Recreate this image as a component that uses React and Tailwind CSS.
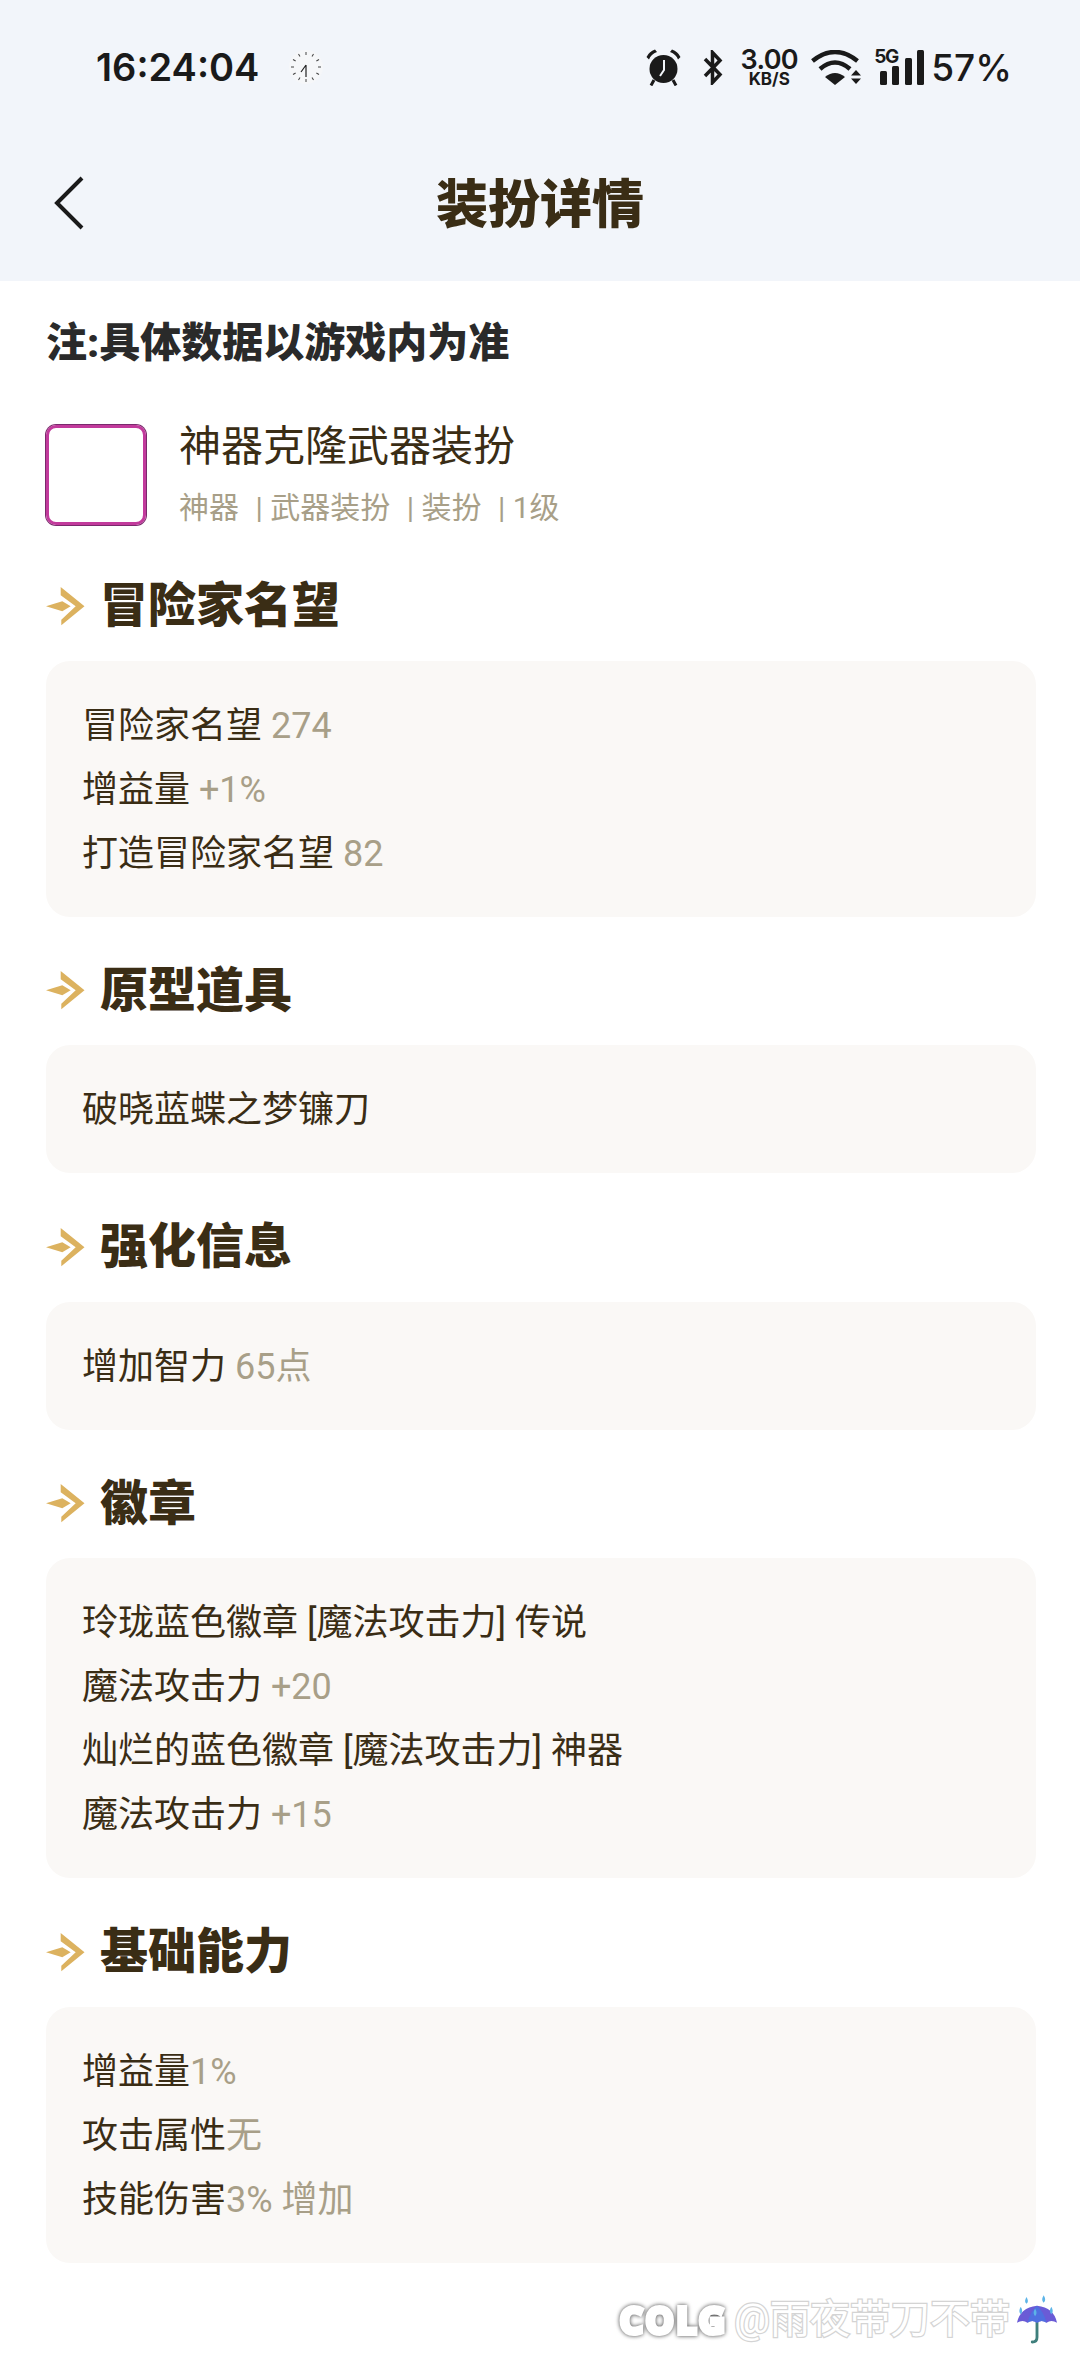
import React from "react";

const sections = [
  {
    title: "冒险家名望",
    rows: [
      ["冒险家名望 ", "274"],
      ["增益量 ", "+1%"],
      ["打造冒险家名望 ", "82"],
    ],
  },
  { title: "原型道具", rows: [["破晓蓝蝶之梦镰刀", ""]] },
  { title: "强化信息", rows: [["增加智力 ", "65点"]] },
  {
    title: "徽章",
    rows: [
      ["玲珑蓝色徽章 [魔法攻击力] 传说", ""],
      ["魔法攻击力 ", "+20"],
      ["灿烂的蓝色徽章 [魔法攻击力] 神器", ""],
      ["魔法攻击力 ", "+15"],
    ],
  },
  {
    title: "基础能力",
    rows: [
      ["增益量", "1%"],
      ["攻击属性", "无"],
      ["技能伤害", "3% 增加"],
    ],
  },
];

const ArrowMark = () => (
  <svg width="39" height="39" viewBox="0 0 39 39" className="shrink-0">
    <path d="M14.7 0L38.500 19.300 15.300 38.300V32.700L29.700 19.300 14.700 8.300Z" fill="#dcb25f" />
    <path d="M0 19.300L16.300 14.300 24.700 19.300 16.300 24.300Z" fill="#dcb25f" />
  </svg>
);

const Clock = () => (
  <svg width="34" height="34" viewBox="0 0 34 34" className="ml-[30px]">
    <circle cx="17" cy="17" r="17" fill="#f6f7f9" />
    {[...Array(12)].map((_, i) => (
      <line
        key={i}
        x1="17"
        y1="2"
        x2="17"
        y2="5"
        stroke="#444"
        strokeWidth="1"
        transform={`rotate(${i * 30} 17 17)`}
      />
    ))}
    <path d="M17 15L12 22M17 15V27" stroke="#222" strokeWidth="1.200" fill="none" />
  </svg>
);

const Alarm = () => (
  <svg width="35" height="37" viewBox="0 0 35 37">
    <circle cx="17.500" cy="20" r="14" fill="#1a1a1a" />
    <path d="M0.500 8Q3 2.500 9 0.500L11 3Q5 5 3 10.500Z M34.500 8Q32 2.500 26 0.500L24 3Q30 5 32 10.500Z" fill="#1a1a1a" />
    <path d="M8 31L5 36.500M27 31L30 36.500" stroke="#1a1a1a" strokeWidth="3" />
    <path d="M18 11V21L14 27" stroke="#f2f5fa" strokeWidth="2" fill="none" />
  </svg>
);

const Bluetooth = () => (
  <svg width="20" height="35" viewBox="0 0 20 35" className="ml-[22px]">
    <path d="M2 9L17 24.500 9.500 32.500V2.500L17 10.500 2 26" stroke="#1a1a1a" strokeWidth="3.500" fill="none" />
  </svg>
);

const Wifi = () => (
  <svg width="50" height="35" viewBox="0 0 50 35" className="ml-[14px]">
    <path d="M1.500 11Q24 -7 46.500 11" stroke="#1a1a1a" strokeWidth="4.500" fill="none" />
    <path d="M9 19Q24 6 39 19" stroke="#1a1a1a" strokeWidth="4.500" fill="none" />
    <path d="M24 35L14 27Q24 19 34 27Z" fill="#1a1a1a" />
    <path d="M45 20L50 25.500H40ZM40 28.500H50L45 34Z" fill="#1a1a1a" />
  </svg>
);

const Bars = () => (
  <svg width="44" height="35" viewBox="0 0 44 35">
    <rect x="0" y="21" width="7" height="14" rx="1.500" fill="#1a1a1a" />
    <rect x="12" y="16" width="7" height="19" rx="1.500" fill="#1a1a1a" />
    <rect x="25" y="8" width="7" height="27" rx="1.500" fill="#1a1a1a" />
    <rect x="37" y="0" width="7" height="35" rx="1.500" fill="#1a1a1a" />
  </svg>
);

const Umbrella = () => (
  <svg width="42" height="50" viewBox="0 0 44 52" className="ml-[6px]">
    <path d="M22 26V44Q22 49 17 49" stroke="#3f7f7c" strokeWidth="3" fill="none" strokeLinecap="round" />
    <path d="M1 29Q4 13 22 11Q40 13 43 29Q37 25 32 29Q27 25 22 29Q17 25 12 29Q7 25 1 29Z" fill="#6a5bd6" />
    <path d="M12 29Q15 17 22 11Q29 17 32 29Q27 25 22 29Q17 25 12 29Z" fill="#4f6fe0" />
    <path d="M11 2Q14 7 11 9Q8 7 11 2ZM29 0Q32 5 29 8Q26 5 29 0ZM20 14Q23 19 20 22Q17 19 20 14ZM37 12Q40 17 37 20Q34 17 37 12ZM5 12Q8 17 5 20Q2 17 5 12Z" fill="#5cb4e8" />
  </svg>
);

const Section = ({ title, rows }) => (
  <section>
    <div className="flex h-[128.500px] items-center gap-[15px] pt-[20px]">
      <ArrowMark />
      <h2 className="text-[48px] font-black leading-none text-[#3a2d15]">{title}</h2>
    </div>
    <div className="rounded-[24px] bg-[#faf8f6] pb-[31px] pl-[36px] pr-[36px] pt-[33px]">
      {rows.map(([label, value], i) => (
        <p key={i} className="whitespace-pre text-[36px] leading-[64px] text-[#3a2d15]">
          {label}
          <span className="text-[#a89f88]">{value}</span>
        </p>
      ))}
    </div>
  </section>
);

export default function App() {
  return (
    <div className="relative min-h-[2362px] bg-white font-['Roboto','Noto_Sans_CJK_SC',sans-serif]">
      <header className="h-[281px] bg-[#f2f5fa]">
        <div className="flex h-[134px] items-center pl-[96px] pr-[68px] font-['Inter',sans-serif] text-[#1a1a1a]">
          <span className="text-[38px] font-semibold leading-none">16:24:04</span>
          <Clock />
          <div className="ml-auto flex items-center">
            <Alarm />
            <Bluetooth />
            <div className="ml-[18px] flex w-[56px] flex-col items-center">
              <span className="text-[27px] font-semibold leading-[24px] tracking-tight">3.00</span>
              <span className="text-[17px] font-bold leading-[15px]">KB/S</span>
            </div>
            <Wifi />
            <div className="relative ml-[19px]">
              <Bars />
              <span className="absolute left-[-6px] top-[-3px] text-[19px] font-bold leading-none tracking-[-1.500px]">5G</span>
            </div>
            <span className="ml-[7px] text-[37px] font-medium leading-none">57%</span>
          </div>
        </div>
        <div className="relative flex h-[138px] items-center justify-center pt-[6px]">
          <svg width="32" height="54" viewBox="0 0 32 54" className="absolute left-[53px] top-[42px]">
            <path d="M29 2L4 27 29 52" stroke="#1a1a1a" strokeWidth="4" fill="none" />
          </svg>
          <h1 className="text-[52px] font-black leading-none text-[#3a2d15]">装扮详情</h1>
        </div>
      </header>

      <main className="pb-[98px] pl-[46px] pr-[44px]">
        <p className="pt-[40px] text-[41px] font-black leading-[44px] text-[#2a2a2a]">注:具体数据以游戏内为准</p>

        <div className="mt-[59px] flex items-center gap-[33px]">
          <div className="h-[100px] w-[100px] rounded-[10px] border-[3px] border-[#c23a9c] shadow-[0_0_0_1px_#7a2a6c]" />
          <div className="-mt-[2px]">
            <p className="text-[42px] leading-[50px] text-[#3a2d15]">神器克隆武器装扮</p>
            <p className="mt-[18px] text-[30px] leading-[36px] text-[#a89f88]">
              神器&nbsp;
              <span className="ml-[9px]">| 武器装扮&nbsp;</span>
              <span className="ml-[9px]">| 装扮&nbsp;</span>
              <span className="ml-[9px]">| 1级</span>
            </p>
          </div>
        </div>

        <div className="mt-[6px]">
          {sections.map((section) => (
            <Section key={section.title} title={section.title} rows={section.rows} />
          ))}
        </div>
      </main>

      {/* watermark sits over the page corner */}
      <div className="absolute bottom-[17px] right-[22px] flex items-center">
        <span className="mr-[6px] font-['Open_Sans',sans-serif] text-[34px] font-semibold leading-none tracking-[4px] text-white [-webkit-text-stroke:6px_#ffffff] [filter:drop-shadow(0_0_2px_#444)]">
          COLG
        </span>
        <span className="text-[40px] leading-none text-white [-webkit-text-stroke:2.500px_#d4d4d4] [paint-order:stroke_fill]">@雨夜带刀不带</span>
        <Umbrella />
      </div>
    </div>
  );
}
